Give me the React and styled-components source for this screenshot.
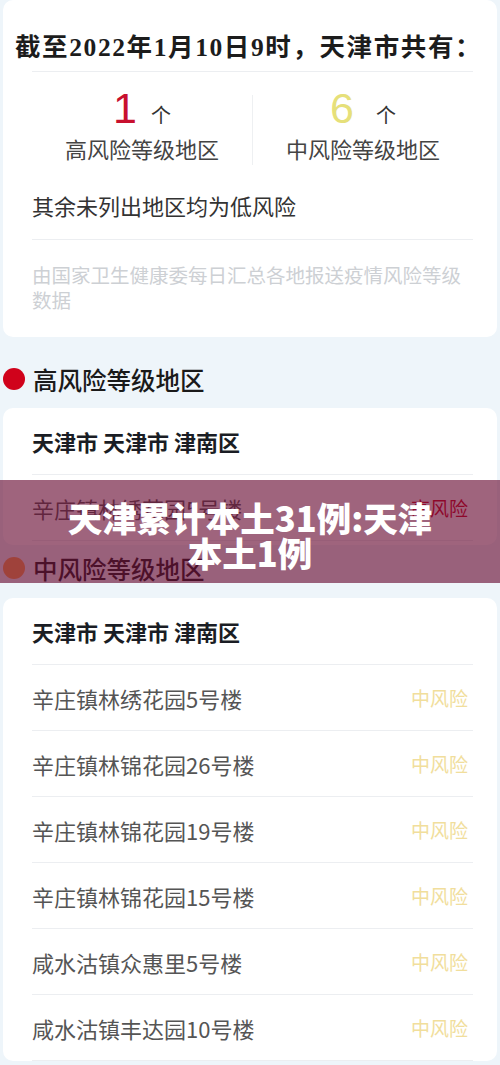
import React from "react";
import styled, { createGlobalStyle } from "styled-components";

const GlobalStyle = createGlobalStyle`
  body {
    margin: 0;
    background: #eef5fa;
    font-family: "Noto Sans CJK SC", "Noto Sans", sans-serif;
  }
`;

const Page = styled.div`
  position: relative;
  padding: 0 3px;
  height: 1065px;
  overflow: hidden;
`;

const Card = styled.div`
  background: #fff;
  border-radius: 10px;
  padding: ${(p) => p.$pad || "0 24px 0 29px"};
`;

const Headline = styled.div`
  margin: 0 0 0 -17px;
  padding-top: 30px;
  font-family: "Liberation Serif", "Noto Sans CJK SC", serif;
  font-weight: bold;
  font-size: 25.5px;
  line-height: 35px;
  letter-spacing: 1.6px;
  color: #1c1c1c;
  white-space: nowrap;
`;

const Divider = styled.div`
  height: 1px;
  background: #eceef1;
  margin-top: ${(p) => p.$top || 0}px;
`;

const Stats = styled.div`
  display: flex;
  padding: 15px 0 12px;
`;

const Stat = styled.div`
  flex: 1;
  display: flex;
  flex-direction: column;
  align-items: center;
  gap: 4px;
`;

const StatSep = styled.div`
  width: 1px;
  background: #eef0f2;
  margin: 8px 0 -2px;
`;

const Count = styled.div`
  display: flex;
  align-items: baseline;
  padding-left: ${(p) => p.$shift || 0}px;
`;

const Num = styled.span`
  font-family: "Liberation Sans", "Noto Sans", sans-serif;
  font-size: 43px;
  line-height: 42px;
  color: ${(p) => p.$color};
`;

const Unit = styled.span`
  margin-left: ${(p) => p.$gap || 14}px;
  font-size: 20px;
  color: #333;
`;

const StatLabel = styled.div`
  font-size: 22px;
  line-height: 30px;
  color: #444;
`;

const Note = styled.div`
  margin-top: 15px;
  font-size: 22px;
  line-height: 30px;
  color: #333;
`;

const Source = styled.div`
  margin-top: 22px;
  padding-bottom: 25px;
  font-size: 19.5px;
  line-height: 25px;
  color: #cdd0d4;
`;

const SectionTitle = styled.div`
  display: flex;
  align-items: center;
  gap: 8px;
  height: 30px;
  margin: ${(p) => p.$top}px 0 ${(p) => p.$bottom}px;
  font-size: 24.5px;
  font-weight: 500;
  color: #1a1a1a;

  &::before {
    content: "";
    width: 22px;
    height: 22px;
    border-radius: 50%;
    background: ${(p) => p.$dot};
  }
`;

const ListHead = styled.div`
  height: 66px;
  display: flex;
  align-items: center;
  border-bottom: 1px solid #eceef1;
  font-size: 22px;
  font-weight: bold;
  color: #1a1d24;
  white-space: pre;
`;

const Row = styled.div`
  height: 65px;
  display: flex;
  align-items: center;
  justify-content: space-between;
  border-bottom: 1px solid #eceef1;
  padding-right: 5px;
`;

const Place = styled.span`
  font-size: 22px;
  color: #555;
`;

const Level = styled.span`
  font-size: 19px;
  color: ${(p) => p.$color};
`;

const Banner = styled.div`
  position: absolute;
  top: 480px;
  left: 0;
  right: 0;
  height: 103px;
  box-sizing: border-box;
  padding-top: 7px;
  display: flex;
  justify-content: center;
  align-items: center;
  background: rgba(105, 12, 52, 0.64);
`;

const BannerText = styled.div`
  max-width: 390px;
  text-align: center;
  font-size: 34.5px;
  line-height: 35px;
  font-weight: 900;
  color: #fff;
`;

const RED = "#c8102e";
const YELLOW = "#f1de9c";

const midRisk = [
  "辛庄镇林绣花园5号楼",
  "辛庄镇林锦花园26号楼",
  "辛庄镇林锦花园19号楼",
  "辛庄镇林锦花园15号楼",
  "咸水沽镇众惠里5号楼",
  "咸水沽镇丰达园10号楼",
];

export default function App() {
  return (
    <Page>
      <GlobalStyle />
      <Card>
        <Headline>截至2022年1月10日9时，天津市共有：</Headline>
        <Divider $top={6} />
        <Stats>
          <Stat>
            <Count $shift={-12}>
              <Num $color={RED}>1</Num>
              <Unit>个</Unit>
            </Count>
            <StatLabel>高风险等级地区</StatLabel>
          </Stat>
          <StatSep />
          <Stat>
            <Count $shift={-12}>
              <Num $color="#e6e07a">6</Num>
              <Unit $gap={22}>个</Unit>
            </Count>
            <StatLabel>中风险等级地区</StatLabel>
          </Stat>
        </Stats>
        <Note>其余未列出地区均为低风险</Note>
        <Divider $top={19} />
        <Source>由国家卫生健康委每日汇总各地报送疫情风险等级数据</Source>
      </Card>

      <SectionTitle $dot="#d0021b" $top={27} $bottom={14}>
        高风险等级地区
      </SectionTitle>
      <Card $pad="0 24px 4px 29px">
        <ListHead>天津市 天津市 津南区</ListHead>
        <Row>
          <Place>辛庄镇林绣花园5号楼</Place>
          <Level $color="#d0021b">高风险</Level>
        </Row>
      </Card>

      <SectionTitle $dot="#ffa04a" $top={8} $bottom={15}>
        中风险等级地区
      </SectionTitle>
      <Card>
        <ListHead>天津市 天津市 津南区</ListHead>
        {midRisk.map((name) => (
          <Row key={name}>
            <Place>{name}</Place>
            <Level $color={YELLOW}>中风险</Level>
          </Row>
        ))}
      </Card>

      <Banner>
        <BannerText>天津累计本土31例:天津本土1例</BannerText>
      </Banner>
    </Page>
  );
}
